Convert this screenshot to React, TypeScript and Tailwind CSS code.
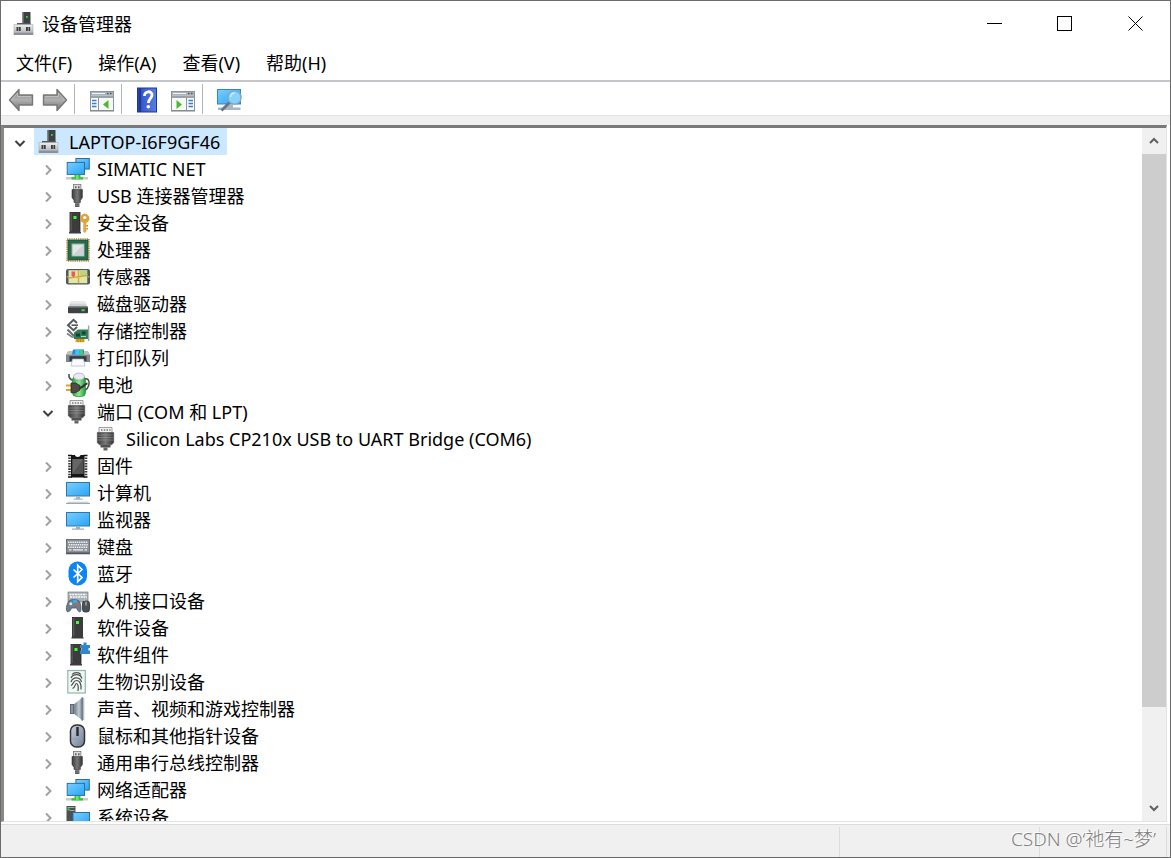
import { useState } from "react";
import type { ReactNode } from "react";

const FONT = "font-['Noto_Sans','Noto_Sans_CJK_SC',sans-serif]";

function Glyph({ children, className = "" }: { children: ReactNode; className?: string }) {
  return (
    <svg viewBox="0 0 24 24" className={`size-6 shrink-0 overflow-visible ${className}`} aria-hidden="true">
      {children}
    </svg>
  );
}

function Gradients() {
  return (
    <svg className="absolute size-0" aria-hidden="true">
      <defs>
        <linearGradient id="screen" x1="0" y1="0" x2="1" y2="1">
          <stop offset="0" stopColor="#7ccdfd" />
          <stop offset="1" stopColor="#27a5f8" />
        </linearGradient>
        <linearGradient id="metal" x1="0" y1="0" x2="0" y2="1">
          <stop offset="0" stopColor="#f0f0f2" />
          <stop offset="1" stopColor="#b3b5ba" />
        </linearGradient>
        <linearGradient id="dark" x1="0" y1="0" x2="1" y2="0">
          <stop offset="0" stopColor="#3b3b3b" />
          <stop offset="0.5" stopColor="#777" />
          <stop offset="1" stopColor="#333" />
        </linearGradient>
        <linearGradient id="arrow" x1="0" y1="0" x2="0" y2="1">
          <stop offset="0" stopColor="#858585" />
          <stop offset="0.5" stopColor="#b0b0b0" />
          <stop offset="1" stopColor="#707070" />
        </linearGradient>
        <linearGradient id="help" x1="0" y1="0" x2="1" y2="0">
          <stop offset="0" stopColor="#2440a8" />
          <stop offset="0.3" stopColor="#3a5fd0" />
          <stop offset="1" stopColor="#5a7de2" />
        </linearGradient>
        <linearGradient id="cone" x1="0" y1="0" x2="1" y2="0">
          <stop offset="0" stopColor="#6f7b86" />
          <stop offset="0.6" stopColor="#c3cbd2" />
          <stop offset="1" stopColor="#7b8792" />
        </linearGradient>
        <linearGradient id="mouse" x1="0" y1="0" x2="1" y2="1">
          <stop offset="0" stopColor="#c9d3df" />
          <stop offset="1" stopColor="#6c7c90" />
        </linearGradient>
        <linearGradient id="battery" x1="0" y1="0" x2="1" y2="0">
          <stop offset="0" stopColor="#2fa441" />
          <stop offset="0.5" stopColor="#8fe890" />
          <stop offset="1" stopColor="#259a3a" />
        </linearGradient>
      </defs>
    </svg>
  );
}

const Tower = ({ x }: { x: number }) => (
  <g transform={`translate(${x} 0)`}>
    <rect x="1" y="1.5" width="10" height="19" fill="#3c3c3c" stroke="#222" strokeWidth="0.8" />
    <path d="M1.4 2h1.4v18H1.4z" fill="#5a5a5a" />
    <path d="M0 22.5v-1.2l1.5-1h9l1.5 1v1.2z" fill="#3a3d42" />
    <rect x="4.5" y="5" width="3" height="3" fill="#3dff2e" />
  </g>
);

const ComputerIcon = () => (
  <Glyph>
    <rect x="9.5" y="0" width="8" height="13" fill="#3d4145" />
    <path d="M9.5 0h1.2v13H9.5z" fill="#777" />
    <rect x="13" y="4" width="1.8" height="1.8" fill="#27e02b" />
    <rect x="4" y="11" width="13.500" height="2" fill="#55585c" />
    <path d="M1 12.500h19V21H1z" fill="url(#metal)" stroke="#a6a8ad" strokeWidth="0.6" />
    <path d="M.7 20.800h19.600v2.200H.7z" fill="#8d9095" />
    <path d="M3.500 15h4.200v4H3.500zM13 15h4.200v4H13z" fill="#3b3c3e" />
    <path d="M4.900 15h1.100v4H4.900zM14.700 15h1.100v4h-1.100z" fill="#8b8d90" />
  </Glyph>
);

const NetworkIcon = () => (
  <Glyph>
    <rect x="9.9" y="1.5" width="13.4" height="10.6" fill="url(#screen)" stroke="#2b70a3" />
    <path d="M0 20h22v2.5H0z" fill="#c8ccc8" />
    <path d="M8.5 18h6v2.2h2.5v2.3H5.5v-2.3h3z" fill="#35c23e" />
    <path d="M10 18h2.5v4H10z" fill="#71e36f" />
    <rect x="1.2" y="5.4" width="17.3" height="12" fill="url(#screen)" stroke="#2b70a3" />
  </Glyph>
);

const UsbIcon = () => (
  <Glyph>
    <rect x="7.5" y="0.5" width="7.4" height="6" fill="#dcdcdc" stroke="#777" strokeWidth="0.8" />
    <path d="M9 2.3h1.6v2H9zM12 2.3h1.6v2H12z" fill="#666" />
    <path d="M6 5.500h10.4v8l-2 3v2H8v-2l-2-3z" fill="url(#dark)" stroke="#3a3a3a" strokeWidth="0.6" />
    <path d="M9 18h4.4v5H9z" fill="#5b5b5b" />
    <path d="M9 19.5h4.4M9 21.3h4.4" stroke="#999" strokeWidth="0.6" />
  </Glyph>
);

const SecurityIcon = () => (
  <Glyph>
    <Tower x={3} />
    <circle cx="18.800" cy="7.500" r="3.500" fill="#dba43c" stroke="#dba43c" strokeWidth="2.400" />
    <path d="M17.200 11.500h3.200V20.500l-1.500 1.500-1.700-1.500z" fill="#e0ab45" />
    <path d="M20.4 14h1.6v1.500h-1.6zM20.4 17h1.4v1.400h-1.400z" fill="#b98222" />
    <circle cx="18.800" cy="6.500" r="1.600" fill="#fff" />
  </Glyph>
);

const CpuIcon = () => (
  <Glyph>
    <rect x="1" y="1" width="22" height="22" fill="none" stroke="#c9a35a" strokeWidth="2" strokeDasharray="1.2 1" />
    <rect x="2" y="2" width="20" height="20" fill="#2a6a4c" stroke="#1e5039" strokeWidth="0.8" />
    <rect x="6" y="6" width="12" height="12" fill="#e3e5e6" stroke="#8fb5a0" />
    <path d="M6.5 17.5L17.5 6.5v11z" fill="#cfd2d4" />
  </Glyph>
);

const SensorIcon = () => (
  <Glyph>
    <rect x="0" y="4" width="24" height="15.5" rx="2" fill="#54575a" />
    <rect x="2.500" y="5.200" width="18.800" height="13" fill="#dfe8a6" />
    <path d="M14 5.500h7v5l-7 1z" fill="#b9d585" />
    <path d="M2.500 13l19-2.500M12.5 5.2v13" stroke="#d9a93d" strokeWidth="1.500" />
    <path d="M5.500 6.500h3.600v4l-1.800 2-1.800-2z" fill="#ea5a5c" />
    <path d="M1.200 11v1.6M22.800 11v1.6" stroke="#ccc" strokeWidth="0.8" />
  </Glyph>
);

const DiskIcon = () => (
  <Glyph>
    <path d="M4.5 9.500h14.500L21.500 15h-19z" fill="#d0d2d4" />
    <path d="M4.5 9.500h14.500l1 2.200H3.600z" fill="#e8e9ea" />
    <rect x="2" y="14.600" width="20" height="6.600" rx="1" fill="#3d4144" />
    <path d="M2.500 15.100h19" stroke="#7b7e81" />
    <rect x="15.5" y="17.2" width="3.2" height="2" fill="#37de3e" />
  </Glyph>
);

const StorageIcon = () => (
  <Glyph>
    <path d="M11 4L7.500.8 2 6.200l5.500 5L11 8" fill="none" stroke="#55585a" strokeWidth="2" />
    <path d="M5.500 6.200h6.500" fill="none" stroke="#55585a" strokeWidth="1.600" />
    <path d="M1.500 10.500l6.500 6.500" fill="none" stroke="#6c7072" strokeWidth="2.200" />
    <path d="M1 14.500l5 3.500h3" fill="none" stroke="#7c8082" strokeWidth="1.600" />
    <path d="M8 13.500L12 10.500h10V20H8z" fill="#2f7d59" />
    <path d="M10 14.500h4v3h-4zM16 12.500h3.500v3H16z" fill="#16432f" />
    <path d="M15 17.500h5" stroke="#a9d6bd" />
    <path d="M22.600 6.500V22" stroke="#9da3a5" strokeWidth="1.400" />
    <path d="M9.500 20h9v3.200h-9z" fill="#eda322" />
    <path d="M12 20v3.200M14.500 20v3.200M17 20v3.200" stroke="#a96c12" strokeWidth="0.6" />
  </Glyph>
);

const PrinterIcon = () => (
  <Glyph>
    <path d="M2 5.500h20L24 9v7H0V9z" fill="#7f878e" />
    <path d="M2 5.500h20l1.500 3.200H.5z" fill="#b9c0c6" />
    <path d="M7 3.500h11v5H6z" fill="#2b83e6" />
    <path d="M9.500 3.500h4v5H9z" fill="#38c8f5" />
    <path d="M13.500 3.500h3l1 5h-4z" fill="#45cf62" />
    <path d="M3.500 10.200h17v5h-17z" fill="#33383c" />
    <path d="M6.500 13h11l1.500 7H5z" fill="#fafbfc" stroke="#a7b4c4" strokeWidth="0.7" />
  </Glyph>
);

const BatteryIcon = () => (
  <Glyph>
    <path d="M18 6c4-1 5.500 1.500 5 5S21 16.500 18 18" fill="none" stroke="#4a4a3c" strokeWidth="1.500" />
    <path d="M3 1c-.5 3.500 1.500 6 5 6.500" fill="none" stroke="#555" strokeWidth="1.600" />
    <rect x="6.500" y="3" width="13" height="20.500" rx="4" fill="url(#battery)" stroke="#2c8c3e" strokeWidth="0.7" />
    <ellipse cx="13" cy="3.500" rx="5.500" ry="3.400" fill="#e8e9f4" stroke="#a0a4b5" strokeWidth="0.7" />
    <path d="M0 12.500h5.500M0 17h5.500" stroke="#e3a51b" strokeWidth="1.900" />
    <path d="M5 10h4.500l4.500 2.500V17l-4.500 2.700H5z" fill="#4d4a47" stroke="#232323" strokeWidth="0.7" />
    <path d="M13.500 14.800c4 .5 4-3.800 8-4.300" fill="none" stroke="#333" strokeWidth="2.200" />
  </Glyph>
);

const PortIcon = () => (
  <Glyph>
    <path d="M4 .5h13v5.500H4z" fill="#f2f2f2" stroke="#888" strokeWidth="0.8" />
    <path d="M6 2.200h1.500v1.500H6zM8.800 2.200h1.500v1.500H8.800zM11.500 2.200H13v1.500h-1.500zM14.200 2.200h1.300v1.500h-1.300z" fill="#777" />
    <path d="M2.300 5.500h16.400v10l-2 2.300H4.300l-2-2.300z" fill="url(#dark)" stroke="#555" strokeWidth="0.6" />
    <path d="M3 8h15M3 10.500h15M3 13h15" stroke="#999" strokeWidth="0.6" />
    <path d="M5.500 17.800h10v2.700h-10z" fill="#505050" />
    <path d="M8.500 20.500h4v3h-4z" fill="#646464" />
  </Glyph>
);

const FirmwareIcon = () => (
  <Glyph>
    <path d="M3.500 3.500v18M20 3.500v18" stroke="#3b3b3b" strokeWidth="2.600" strokeDasharray="1.600 1.100" />
    <path d="M5 1h4c0 2.500 5.500 2.500 5.500 0h4v22.500H5z" fill="#151515" />
    <path d="M6.300 5h11v15h-11z" fill="#666" />
    <path d="M6.300 20L17.300 5v15z" fill="#525252" />
    <path d="M2 1.500h4M17.500 1.500h4M2 23h4M17.500 23h4" stroke="#111" strokeWidth="1.500" />
  </Glyph>
);

const PcIcon = () => (
  <Glyph>
    <rect x="0.5" y="1.500" width="23" height="13.500" fill="url(#screen)" stroke="#2f78aa" />
    <path d="M10 15.500h4v2h2.500v1.200h-9v-1.200H10z" fill="#a9b4be" />
    <path d="M2 20.800h20l2 2H0z" fill="#c4ced6" />
    <path d="M0 22.500h24" stroke="#9aa8b5" />
  </Glyph>
);

const MonitorIcon = () => (
  <Glyph>
    <rect x="0.5" y="4.500" width="23" height="13.500" fill="url(#screen)" stroke="#2f78aa" />
    <path d="M10 18.500h4v2h4v1.300H6v-1.300h4z" fill="#a3b0bb" />
  </Glyph>
);

const KeyboardIcon = () => (
  <Glyph>
    <rect x="0.4" y="4.400" width="23.200" height="14.500" fill="#8a9198" stroke="#596068" strokeWidth="0.8" />
    <path d="M2 7.200h20M2.800 9.700h19M2 12.200h20" stroke="#eef1f3" strokeWidth="1.500" strokeDasharray="1.500 0.700" />
    <path d="M3 14.800h2.500M7 14.800h10M18.500 14.800H21" stroke="#eef1f3" strokeWidth="1.300" />
    <path d="M.5 17.500h23v1.400H.5z" fill="#4c5258" />
  </Glyph>
);

const BluetoothIcon = () => (
  <Glyph>
    <rect x="2.500" y="-0.500" width="18.500" height="24" rx="9" fill="#0a84f7" />
    <path d="M7.500 7.500l8.500 8-4.300 4.200V3.300L16 7.500l-8.500 8" fill="none" stroke="#fff" strokeWidth="1.700" />
  </Glyph>
);

const HidIcon = () => (
  <Glyph>
    <rect x="2" y="3" width="20" height="10" fill="#a9b0b6" stroke="#777f86" strokeWidth="0.7" />
    <path d="M3.500 5.500h17M4 8h17" stroke="#fbfcfc" strokeWidth="1.700" strokeDasharray="2 0.700" />
    <path d="M3 12c2-2 8-2 10 0 2 3 2.500 8 1.500 10.500-1.500 1.200-3-1-3.800-3.500H5.500C4.500 21.500 3 23.500 1 22.500-.5 19.500 1 14.500 3 12z" fill="#6e7d8b" stroke="#465564" strokeWidth="0.800" />
    <circle cx="4.800" cy="14.800" r="1.500" fill="#dfe6ec" />
    <path d="M7 10.500h4v3.500H7z" fill="#35a9ea" />
    <circle cx="11.500" cy="15" r="1.300" fill="#e05a3c" />
    <rect x="16.500" y="12" width="7" height="11" rx="2.500" fill="#4b5157" stroke="#2e3236" strokeWidth="0.800" />
    <path d="M20 12.500v4M18.500 9v3" stroke="#b8bec3" strokeWidth="1.200" />
  </Glyph>
);

const SoftwareIcon = () => (
  <Glyph>
    <Tower x={5.5} />
  </Glyph>
);

const ComponentIcon = () => (
  <Glyph>
    <Tower x={4} />
    <path d="M14 2h3.500V-.5h3V2H24v3h-1.500v2.500H24V11H14V7.500h2V5h-2z" fill="#2f86c8" />
  </Glyph>
);

const BiometricIcon = () => (
  <Glyph>
    <rect x="1.800" y="0.500" width="17.500" height="22.500" fill="#f1f7f5" stroke="#8eb8ab" strokeWidth="1.200" />
    <g fill="none" stroke="#4b5150" strokeWidth="1.200">
      <path d="M6 4.500c2-2.500 7-2.500 9 0M5 8c2-4.500 9.500-4.500 11 .5M5 12c2-6 9.500-5 10.500 0M5 15.500c2.500-1 2-5 5.500-5s5 4 4.500 9M6.500 18.500c3-1 2.500-5 4-5s2.200 4 1.500 7.500" />
    </g>
  </Glyph>
);

const SpeakerIcon = () => (
  <Glyph>
    <path d="M4 7h4.500v10H4z" fill="#5d6a76" />
    <path d="M5 8h2v8H5z" fill="#8796a4" />
    <path d="M8.300 7L16 .8v22.400L8.300 17z" fill="url(#cone)" />
    <path d="M16.300.3v23.400" stroke="#73808c" strokeWidth="1.600" />
    <path d="M17.700 1v22" stroke="#b0b9c1" strokeWidth="1.200" />
  </Glyph>
);

const MouseIcon = () => (
  <Glyph>
    <rect x="4.500" y="1" width="14" height="22" rx="6" fill="url(#mouse)" stroke="#2f3236" strokeWidth="1.500" />
    <rect x="10.300" y="3" width="2.400" height="9" fill="#25292e" />
    <path d="M6.500 14.500c3 1.500 7 1.500 10 0" stroke="#8d9bac" fill="none" />
  </Glyph>
);

const SystemIcon = () => (
  <Glyph>
    <rect x="0.500" y="1" width="9" height="21" fill="#4c5054" />
    <path d="M1.500 2.500h7M4 5.500h4.500" stroke="#a3a7aa" />
    <rect x="1.500" y="3.500" width="2.200" height="2" fill="#3bd442" />
    <rect x="7" y="7.500" width="16.500" height="12.500" fill="url(#screen)" stroke="#2b70a3" />
  </Glyph>
);

const ArrowIcon = ({ forward = false }: { forward?: boolean }) => (
  <Glyph>
    <path
      d={forward ? "M23.500 12L14 1.500V7H.5v10H14v5.500z" : "M.5 12L10 1.500V7h13.500v10H10v5.500z"}
      fill="url(#arrow)"
      stroke="#777"
      strokeWidth="1.400"
      strokeLinejoin="round"
    />
    <path
      d={forward ? "M2 8.500h13.500V5l6.300 7" : "M22 8.500H8.500V5l-6.300 7"}
      fill="none"
      stroke="#c5c5c5"
      strokeWidth="0.800"
    />
  </Glyph>
);

const PaneIcon = ({ right = false }: { right?: boolean }) => (
  <Glyph>
    <rect x="0.500" y="3.500" width="23" height="19" fill="#f7f8f8" stroke="#8b939c" />
    <path d="M1 4h22v3.500H1z" fill="#a9b1bb" />
    <path d="M2 5.500h13" stroke="#f3f4f6" />
    <path d="M17 5.500h1.500M20 5.500h1.500" stroke="#4f5963" strokeWidth="1.500" />
    <path d="M1 8.800h22" stroke="#9aa2aa" strokeWidth="2.400" />
    <path d={right ? "M15.500 10v12.500" : "M8.500 10v12.500"} stroke="#8b939c" />
    <path
      d={right ? "M17.500 12.500h4.500M17.500 15.500h4.500M17.500 18.500h4.500" : "M2 12.500h4.500M2 15.500h4.500M2 18.500h4.500"}
      stroke="#3f7fbf"
      strokeWidth="1.400"
    />
    <path d={right ? "M5.500 12l5.500 4.500L5.500 21z" : "M18.500 12L13 16.500l5.500 4.500z"} fill="#4db82e" />
    <path d="M0 23h24" stroke="#7c848c" />
  </Glyph>
);

const HelpIcon = () => (
  <Glyph>
    <rect x="2.500" y="0" width="19" height="24" fill="url(#help)" stroke="#203894" />
    <path d="M5 0v24" stroke="#1c338f" strokeWidth="1.500" />
    <path d="M9.500 8c-.3-5.500 8-5.500 7.500-.8C16.800 10.500 13.500 11 13.300 15" fill="none" stroke="#fff" strokeWidth="2.800" />
    <circle cx="13.300" cy="18.800" r="1.800" fill="#fff" />
  </Glyph>
);

const ScanIcon = () => (
  <Glyph>
    <rect x="0.500" y="1.500" width="23" height="14.500" fill="url(#screen)" stroke="#3289bd" />
    <path d="M9 16.500h7v3h7.500v2.500H1v-2.500h8z" fill="#a6b6c2" />
    <path d="M12.500 14.500L4.500 22.500" stroke="#68737d" strokeWidth="2.600" />
    <circle cx="17.500" cy="9.500" r="6.600" fill="#8fd6fa" fillOpacity="0.900" stroke="#7fa9c2" strokeWidth="1.400" />
    <path d="M13.500 9c.3-2.500 2-3.800 4-3.800" stroke="#d4f0ff" strokeWidth="1.300" fill="none" />
  </Glyph>
);

type Device = { name: string; icon: () => ReactNode; children?: Device[] };

const devices: Device[] = [
  { name: "SIMATIC NET", icon: NetworkIcon },
  { name: "USB 连接器管理器", icon: UsbIcon },
  { name: "安全设备", icon: SecurityIcon },
  { name: "处理器", icon: CpuIcon },
  { name: "传感器", icon: SensorIcon },
  { name: "磁盘驱动器", icon: DiskIcon },
  { name: "存储控制器", icon: StorageIcon },
  { name: "打印队列", icon: PrinterIcon },
  { name: "电池", icon: BatteryIcon },
  {
    name: "端口 (COM 和 LPT)",
    icon: PortIcon,
    children: [{ name: "Silicon Labs CP210x USB to UART Bridge (COM6)", icon: PortIcon }],
  },
  { name: "固件", icon: FirmwareIcon },
  { name: "计算机", icon: PcIcon },
  { name: "监视器", icon: MonitorIcon },
  { name: "键盘", icon: KeyboardIcon },
  { name: "蓝牙", icon: BluetoothIcon },
  { name: "人机接口设备", icon: HidIcon },
  { name: "软件设备", icon: SoftwareIcon },
  { name: "软件组件", icon: ComponentIcon },
  { name: "生物识别设备", icon: BiometricIcon },
  { name: "声音、视频和游戏控制器", icon: SpeakerIcon },
  { name: "鼠标和其他指针设备", icon: MouseIcon },
  { name: "通用串行总线控制器", icon: UsbIcon },
  { name: "网络适配器", icon: NetworkIcon },
  { name: "系统设备", icon: SystemIcon },
];

function Toggle({ open, label, onClick }: { open: boolean; label: string; onClick: () => void }) {
  return (
    <button type="button" aria-label={label} aria-expanded={open} onClick={onClick} className="grid h-full w-7 shrink-0 place-items-center pt-0.5">
      <svg viewBox="0 0 12 12" className="size-3" fill="none" strokeWidth="2" aria-hidden="true">
        {open ? <path d="M1.500 4L6 8.500 10.500 4" stroke="#404040" /> : <path d="M4 1.500L8.500 6 4 10.500" stroke="#a0a0a0" />}
      </svg>
    </button>
  );
}

function DeviceNode({ device }: { device: Device }) {
  const [open, setOpen] = useState(Boolean(device.children));
  const Icon = device.icon;
  return (
    <li role="treeitem" aria-label={device.name}>
      <div className="flex h-[27px] items-center pl-[30px]">
        <Toggle open={open} label={device.name} onClick={() => setOpen(!open)} />
        <span className="ml-1 mt-px flex">
          <Icon />
        </span>
        <span className="ml-[7px] whitespace-nowrap">{device.name}</span>
      </div>
      {open && device.children && (
        <ul role="group">
          {device.children.map((child) => (
            <li key={child.name} role="treeitem" className="flex h-[27px] items-center pl-[91px]">
              <span className="mt-px flex">
                <child.icon />
              </span>
              <span className="ml-[7px] whitespace-nowrap">{child.name}</span>
            </li>
          ))}
        </ul>
      )}
    </li>
  );
}

function Separator() {
  return <span className="-mt-0.5 h-[30px] w-px bg-[#b4b4b4]" />;
}

export default function App() {
  const [open, setOpen] = useState(true);
  return (
    <div className={`relative flex h-screen flex-col border border-[#6b6b6b] bg-white text-lg leading-6 text-black ${FONT}`}>
      <Gradients />
      <header className="flex h-[45px] shrink-0 items-center pl-3">
        <ComputerIcon />
        <h1 className="ml-[5px]">设备管理器</h1>
        <div className="ml-auto flex h-full">
          <button type="button" aria-label="最小化" className="grid w-[70px] place-items-center">
            <span className="h-px w-[15px] bg-black" />
          </button>
          <button type="button" aria-label="最大化" className="grid w-[71px] place-items-center">
            <span className="size-[15px] border border-black" />
          </button>
          <button type="button" aria-label="关闭" className="grid w-[70px] place-items-center">
            <svg viewBox="0 0 15 15" className="size-[15px]" stroke="#000" aria-hidden="true">
              <path d="M.5.5l14 14M14.500.5l-14 14" />
            </svg>
          </button>
        </div>
      </header>

      <nav className="flex h-[34px] shrink-0 items-center gap-[26px] pl-[15px]">
        <button type="button">文件(F)</button>
        <button type="button">操作(A)</button>
        <button type="button">查看(V)</button>
        <button type="button">帮助(H)</button>
      </nav>

      <div role="toolbar" className="flex h-[36px] shrink-0 items-center border-t-2 border-b border-t-[#c4c6ca] border-b-[#e3e3e3] pt-0.5 pl-2">
        <button type="button" aria-label="后退"><ArrowIcon /></button>
        <button type="button" aria-label="前进" className="mr-[7px] ml-2.5"><ArrowIcon forward /></button>
        <Separator />
        <button type="button" aria-label="显示/隐藏控制台树" className="mr-[7px] ml-[15px]"><PaneIcon /></button>
        <Separator />
        <button type="button" aria-label="帮助" className="ml-[13px]"><HelpIcon /></button>
        <button type="button" aria-label="显示/隐藏操作窗格" className="mr-[7px] ml-3"><PaneIcon right /></button>
        <Separator />
        <button type="button" aria-label="扫描检测硬件改动" className="ml-3.5"><ScanIcon /></button>
      </div>
      <div className="h-[9px] shrink-0 bg-[#f0f0f0]" />

      <main className="mr-[3px] flex min-h-0 flex-1 border-t-3 border-r border-b border-l-3 border-t-[#7a7a7a] border-r-[#e3e3e3] border-b-[#e3e3e3] border-l-[#8a8886]">
        <ul role="tree" aria-label="设备" className="min-w-0 flex-1 overflow-hidden">
          <li role="treeitem" aria-selected="true">
            <div className="flex h-[27px] items-center pl-[2px]">
              <Toggle open={open} label="LAPTOP-I6F9GF46" onClick={() => setOpen(!open)} />
              <span className="flex h-full items-center bg-[#cce8ff] pr-[7px] pl-1">
                <span className="mt-px flex">
                  <ComputerIcon />
                </span>
                <span className="ml-[7px]">LAPTOP-I6F9GF46</span>
              </span>
            </div>
            {open && (
              <ul role="group">
                {devices.map((device) => (
                  <DeviceNode key={device.name} device={device} />
                ))}
              </ul>
            )}
          </li>
        </ul>
        <div className="flex w-6 shrink-0 flex-col bg-[#f0f0f0]">
          <button type="button" aria-label="向上滚动" className="grid h-[26px] shrink-0 place-items-center">
            <svg viewBox="0 0 12 12" className="size-3" fill="none" stroke="#606060" strokeWidth="2" aria-hidden="true">
              <path d="M2 8l4-4 4 4" />
            </svg>
          </button>
          <div className="min-h-0 flex-1">
            <div className="h-[86.2%] bg-[#cdcdcd]" />
          </div>
          <button type="button" aria-label="向下滚动" className="grid h-[26px] shrink-0 place-items-center">
            <svg viewBox="0 0 12 12" className="size-3" fill="none" stroke="#606060" strokeWidth="2" aria-hidden="true">
              <path d="M2 4l4 4 4-4" />
            </svg>
          </button>
        </div>
      </main>

      <footer className="mt-[2px] flex h-[33px] shrink-0 border-t border-[#dcdcdc] bg-[#f0f0f0] pt-[2px] pr-[3px]">
        <span className="flex-1 border-r border-[#dcdcdc]" />
        <span className="w-[200px] border-r border-[#dcdcdc]" />
        <span className="w-[127px] border-r border-[#dcdcdc]" />
      </footer>
      <span className="absolute right-3.5 bottom-1.5 text-[19px] leading-6 font-light text-[#808080] [text-shadow:-1px_-1px_0_#fff]">
        CSDN @‘祂有~梦’
      </span>
    </div>
  );
}
